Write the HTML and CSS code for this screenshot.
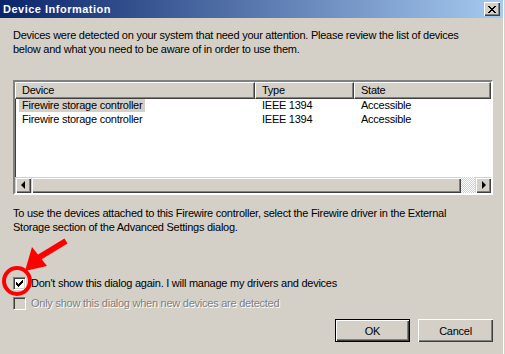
FILE: index.html
```html
<!DOCTYPE html>
<html lang="en">
<head>
  <meta charset="UTF-8" />
  <title>Device Information</title>
  <link rel="stylesheet" href="styles.css">
</head>
<body>
  <div class="window">
    <div class="titlebar">
      <span class="title">Device Information</span>
      <span class="close-btn">
        <svg width="8" height="7" viewBox="0 0 8 7" shape-rendering="crispEdges">
          <path fill="#000" d="M0 0h2v1H0zM6 0h2v1H6zM1 1h2v1H1zM5 1h2v1H5zM2 2h4v1H2zM3 3h2v1H3zM2 4h4v1H2zM1 5h2v1H1zM5 5h2v1H5zM0 6h2v1H0zM6 6h2v1H6z"/>
        </svg>
      </span>
    </div>

    <div class="content">
      <p class="intro">Devices were detected on your system that need your attention. Please review the list of devices<br>below and what you need to be aware of in order to use them.</p>

      <div class="listview">
        <div class="list-header">
          <div class="col">Device</div>
          <div class="col">Type</div>
          <div class="col">State</div>
        </div>
        <div class="list-body">
          <div class="list-row">
            <div class="cell"><span class="selected">Firewire storage controller</span></div>
            <div class="cell">IEEE 1394</div>
            <div class="cell">Accessible</div>
          </div>
          <div class="list-row">
            <div class="cell"><span class="plain">Firewire storage controller</span></div>
            <div class="cell">IEEE 1394</div>
            <div class="cell">Accessible</div>
          </div>
        </div>
        <div class="hscroll">
          <div class="scroll-btn"><span class="arrow-left"></span></div>
          <div class="scroll-thumb"></div>
          <div class="scroll-track"></div>
          <div class="scroll-btn"><span class="arrow-right"></span></div>
        </div>
      </div>

      <p class="note">To use the devices attached to this Firewire controller, select the Firewire driver in the External<br>Storage section of the Advanced Settings dialog.</p>

      <div class="checks">
        <div class="check-row">
          <span class="checkbox">
            <svg width="7" height="7" viewBox="0 0 7 7" shape-rendering="crispEdges">
              <path fill="#000" d="M6 0h1v1H6zM5 1h2v1H5zM0 2h1v1H0zM4 2h3v1H4zM0 3h2v1H0zM3 3h3v1H3zM0 4h5v1H0zM1 5h3v1H1zM2 6h1v1H2z"/>
            </svg>
          </span>
          <span class="check-label">Don't show this dialog again. I will manage my drivers and devices</span>
        </div>
        <div class="check-row disabled">
          <span class="checkbox"></span>
          <span class="check-label">Only show this dialog when new devices are detected</span>
        </div>
      </div>

      <div class="buttons">
        <button class="btn default">OK</button>
        <button class="btn">Cancel</button>
      </div>
    </div>

    <!-- red annotation drawn over the dialog -->
    <svg class="annotation" width="505" height="354" viewBox="0 0 505 354">
      <circle cx="17" cy="281" r="13" fill="none" stroke="#f00" stroke-width="4"/>
      <line x1="66" y1="241" x2="38" y2="258" stroke="#f00" stroke-width="6"/>
      <polygon fill="#f00" points="32,247 47,266 25,271"/>
    </svg>
  </div>
</body>
</html>
```

FILE: styles.css
```css
body {
  margin: 0;
  background: #d4d0c8;
  font-family: "Liberation Sans", Arial, sans-serif;
  font-size: 11px;
  letter-spacing: -0.25px;
  color: #000;
}

.window {
  position: relative;
  width: 503px;
  height: 354px;
  border-right: 1px solid #fff;
  overflow: hidden;
}

.titlebar {
  height: 18px;
  padding: 0 3px;
  display: flex;
  align-items: center;
  justify-content: space-between;
  background: linear-gradient(to right, #0a246a, #a6caf0);
}

.title {
  color: #fff;
  font-weight: bold;
  font-size: 11px;
  letter-spacing: 0.5px;
}

.close-btn {
  width: 16px;
  height: 14px;
  box-sizing: border-box;
  display: flex;
  align-items: center;
  justify-content: center;
  background: #d4d0c8;
  box-shadow: inset 1px 1px #fff, inset -1px -1px #404040, inset -2px -2px #808080;
}

.content {
  padding: 10px 10px 0 13px;
}

.intro,
.note {
  margin: 0;
  line-height: 14px;
  white-space: nowrap;
}

.listview {
  margin-top: 24px;
  height: 115px;
  box-sizing: border-box;
  border: 2px solid;
  border-color: #808080 #fff #fff #808080;
  box-shadow: inset 1px 1px #404040;
  display: flex;
  flex-direction: column;
  background: #fff;
}

.list-header,
.list-row {
  display: grid;
  grid-template-columns: 240px 99px 1fr;
}

.list-header .col {
  height: 17px;
  box-sizing: border-box;
  padding-left: 6px;
  line-height: 15px;
  background: #d4d0c8;
  border-top: 1px solid #fff;
  border-left: 1px solid #fff;
  box-shadow: inset -1px -1px #808080;
  border-right: 1px solid #404040;
  border-bottom: 1px solid #404040;
}

.list-body {
  flex: 1;
}

.list-row {
  height: 14px;
  line-height: 13px;
}

.cell {
  padding-left: 7px;
}

.cell .selected,
.cell .plain {
  display: inline-block;
  margin-left: -3px;
  padding: 0 3px;
  height: 13px;
}

.cell .selected {
  background: #d4d0c8;
}

.hscroll {
  height: 16px;
  display: flex;
  background: #d4d0c8;
}

.scroll-btn,
.scroll-thumb {
  width: 16px;
  height: 16px;
  box-sizing: border-box;
  background: #d4d0c8;
  box-shadow: inset 1px 1px #d4d0c8, inset 2px 2px #fff, inset -1px -1px #404040, inset -2px -2px #808080;
  display: flex;
  align-items: center;
  justify-content: center;
}

.scroll-thumb {
  width: auto;
  flex: 1;
}

.scroll-track {
  width: 14px;
  background: repeating-conic-gradient(#d4d0c8 0 25%, #fff 0 50%) 0 0 / 2px 2px;
}

.arrow-left,
.arrow-right {
  width: 0;
  height: 0;
  border-top: 4px solid transparent;
  border-bottom: 4px solid transparent;
}

.arrow-left {
  border-right: 4px solid #000;
  margin-left: -1px;
}

.arrow-right {
  border-left: 4px solid #000;
  margin-left: 1px;
}

.note {
  margin-top: 11px;
}

.checks {
  margin-top: 39px;
}

.check-row {
  height: 20px;
  display: flex;
  align-items: center;
  gap: 5px;
}

.checkbox {
  width: 13px;
  height: 13px;
  box-sizing: border-box;
  background: #fff;
  border: 1px solid;
  border-color: #808080 #fff #fff #808080;
  box-shadow: inset 1px 1px #404040, inset -1px -1px #d4d0c8;
  display: flex;
  align-items: center;
  justify-content: center;
}

.disabled .checkbox {
  background: #d4d0c8;
}

.disabled .check-label {
  color: #808080;
  text-shadow: 1px 1px 0 #fff;
}

.buttons {
  margin-top: 6px;
  display: flex;
  justify-content: flex-end;
  gap: 8px;
}

.btn {
  width: 75px;
  height: 23px;
  padding: 0;
  border: none;
  background: #d4d0c8;
  font-family: inherit;
  font-size: 11px;
  letter-spacing: inherit;
  color: #000;
  box-shadow: inset 1px 1px #fff, inset -1px -1px #404040, inset -2px -2px #808080;
}

.btn.default {
  border: 1px solid #000;
}

.annotation {
  position: absolute;
  left: 0;
  top: 0;
  pointer-events: none;
}
```
